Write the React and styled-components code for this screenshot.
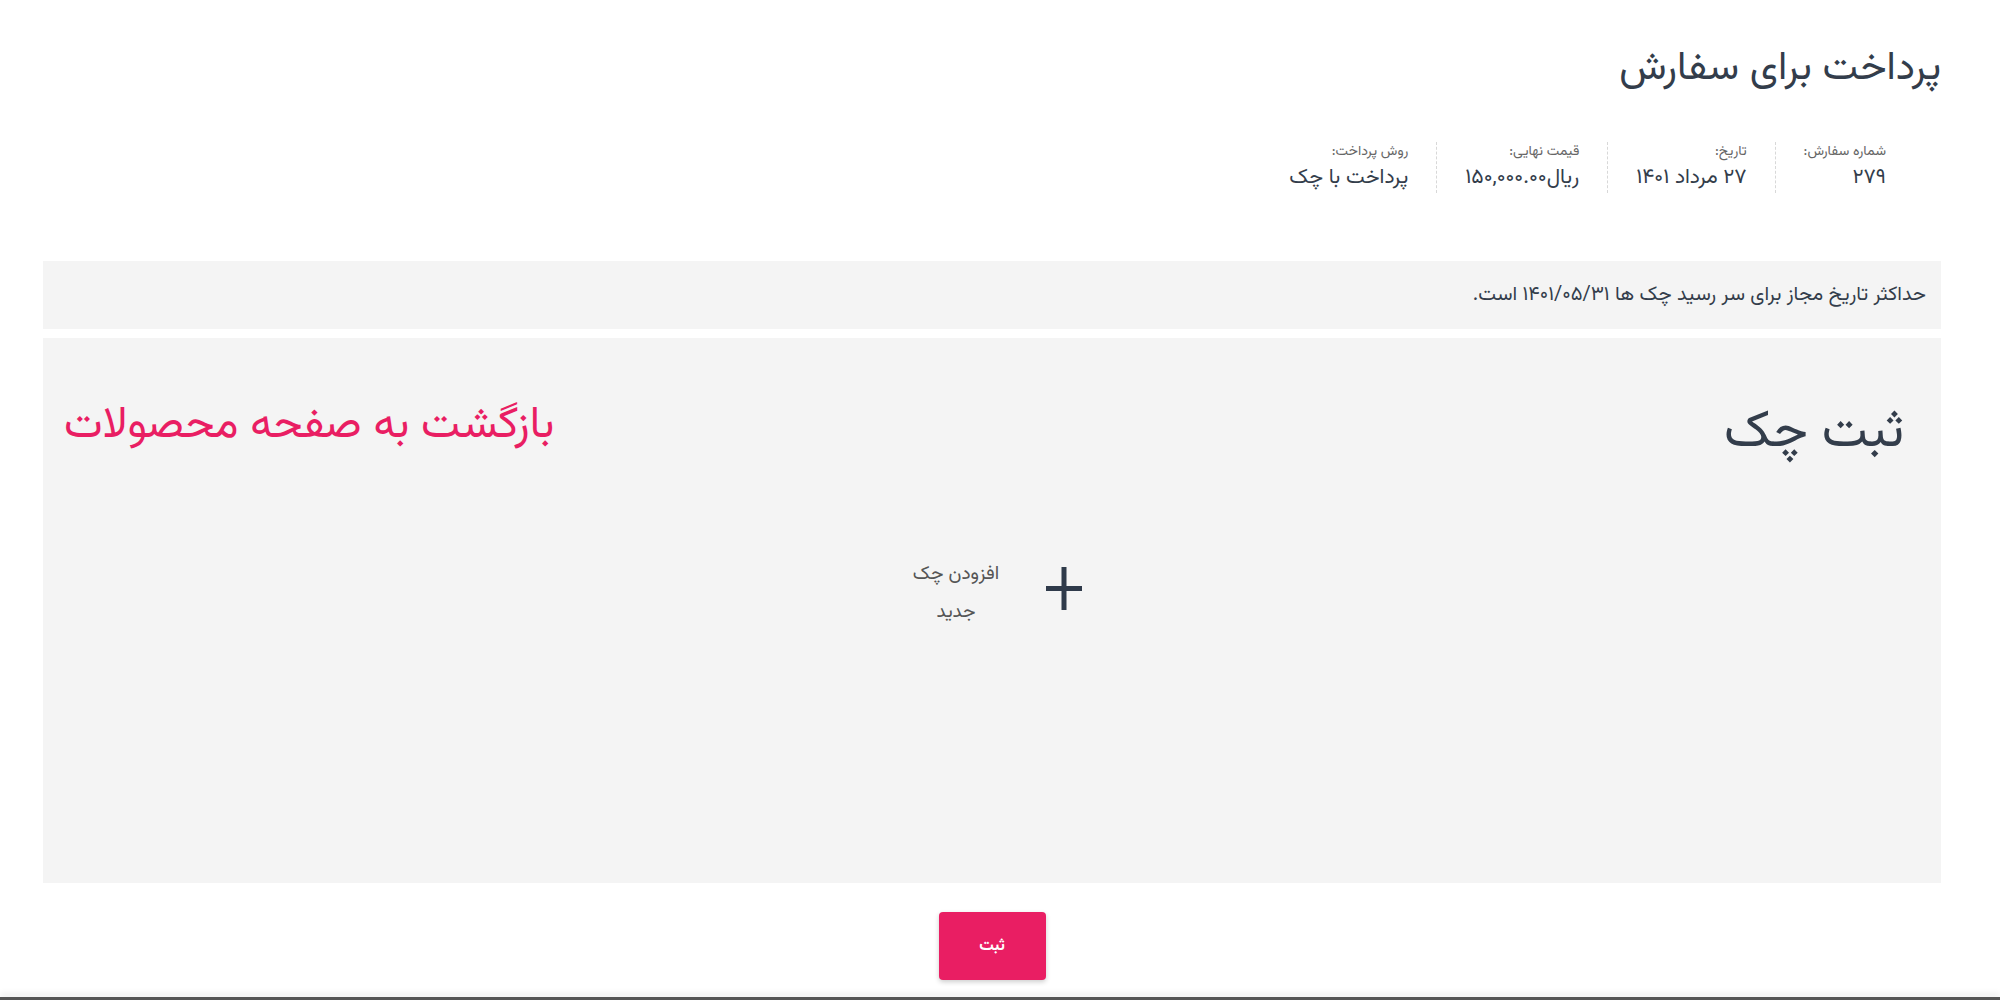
import React from "react";
import styled, { createGlobalStyle } from "styled-components";

const Global = createGlobalStyle`
  html, body { margin: 0; padding: 0; background: #fff; }
  body { font-family: "Vazirmatn", "Noto Sans Arabic", "DejaVu Sans", sans-serif; }
`;

const Page = styled.div`
  direction: rtl;
  height: 100vh;
  box-sizing: border-box;
  display: flex;
  flex-direction: column;
  padding: 0 59px 0 43px;
  position: relative;
  color: #333d4b;
`;

const Title = styled.h1`
  margin: 40px 0 0;
  font-size: 40px;
  font-weight: 400;
  line-height: 58px;
  color: #333d4b;
`;

const InfoList = styled.ul`
  list-style: none;
  margin: 44px 0 0;
  padding: 0 55px 0 0;
  display: flex;
`;

const InfoItem = styled.li`
  padding: 0 28px;
  border-left: 1px dashed #d8d8d8;
  &:first-child { padding-right: 0; }
  &:last-child { border-left: none; }
`;

const InfoLabel = styled.div`
  font-size: 14px;
  line-height: 20px;
  color: #666;
`;

const InfoValue = styled.div`
  font-size: 21px;
  line-height: 31px;
  color: #333d4b;
`;

const Notice = styled.div`
  margin-top: 68px;
  background: #f4f4f4;
  height: 68px;
  display: flex;
  align-items: center;
  padding: 0 15px;
  font-size: 20px;
  color: #333d4b;
`;

const Panel = styled.section`
  margin-top: 9px;
  background: #f4f4f4;
  height: 545px;
  box-sizing: border-box;
  padding: 58px 37px 0 21px;
  display: flex;
  flex-direction: column;
`;

const PanelHead = styled.div`
  display: flex;
  justify-content: space-between;
  align-items: flex-start;
`;

const PanelTitle = styled.h2`
  margin: 3px 0 0;
  font-size: 52px;
  font-weight: 400;
  line-height: 70px;
  color: #333d4b;
`;

const BackLink = styled.a`
  font-size: 44px;
  line-height: 62px;
  color: #e91e63;
  text-decoration: none;
`;

const AddRow = styled.div`
  display: flex;
  justify-content: center;
  margin-top: 75px;
  padding-left: 22px;
`;

const AddButton = styled.button`
  display: flex;
  align-items: center;
  gap: 42px;
  background: none;
  border: none;
  padding: 0;
  cursor: pointer;
  font-family: inherit;
  direction: rtl;
`;

const AddText = styled.span`
  font-size: 19px;
  line-height: 38px;
  padding-top: 12px;
  color: #555;
  text-align: center;
  width: 96px;
`;

const Footer = styled.div`
  display: flex;
  justify-content: center;
  margin-top: 29px;
`;

const Submit = styled.button`
  width: 107px;
  height: 68px;
  border: none;
  border-radius: 4px;
  background: #e91e63;
  color: #fff;
  font-family: inherit;
  font-size: 16px;
  font-weight: 700;
  box-shadow: 0 2px 5px rgba(0, 0, 0, 0.2);
  cursor: pointer;
`;

const BottomEdge = styled.div`
  position: fixed;
  left: 0;
  right: 0;
  bottom: 0;
  height: 3px;
  background: #555;
  box-shadow: 0 -3px 6px rgba(0, 0, 0, 0.12);
`;

const PlusIcon = () => (
  <svg width="36" height="43" viewBox="0 0 36 43" aria-hidden="true">
    <rect x="15.5" y="0" width="5" height="43" fill="#2f3a4a" />
    <rect x="0" y="19" width="36" height="5" fill="#2f3a4a" />
  </svg>
);

export default function App() {
  const info = [
    { label: "شماره سفارش:", value: "۲۷۹" },
    { label: "تاریخ:", value: "۲۷ مرداد ۱۴۰۱" },
    { label: "قیمت نهایی:", value: "ریال۱۵۰,۰۰۰.۰۰" },
    { label: "روش پرداخت:", value: "پرداخت با چک" },
  ];
  return (
    <Page>
      <Global />
      <Title>پرداخت برای سفارش</Title>
      <InfoList>
        {info.map((i) => (
          <InfoItem key={i.label}>
            <InfoLabel>{i.label}</InfoLabel>
            <InfoValue>{i.value}</InfoValue>
          </InfoItem>
        ))}
      </InfoList>
      <Notice>حداکثر تاریخ مجاز برای سر رسید چک ها ۱۴۰۱/۰۵/۳۱ است.</Notice>
      <Panel>
        <PanelHead>
          <PanelTitle>ثبت چک</PanelTitle>
          <BackLink href="#">بازگشت به صفحه محصولات</BackLink>
        </PanelHead>
        <AddRow>
          <AddButton>
            <PlusIcon />
            <AddText>افزودن چک جدید</AddText>
          </AddButton>
        </AddRow>
      </Panel>
      <Footer>
        <Submit>ثبت</Submit>
      </Footer>
      <BottomEdge />
    </Page>
  );
}
